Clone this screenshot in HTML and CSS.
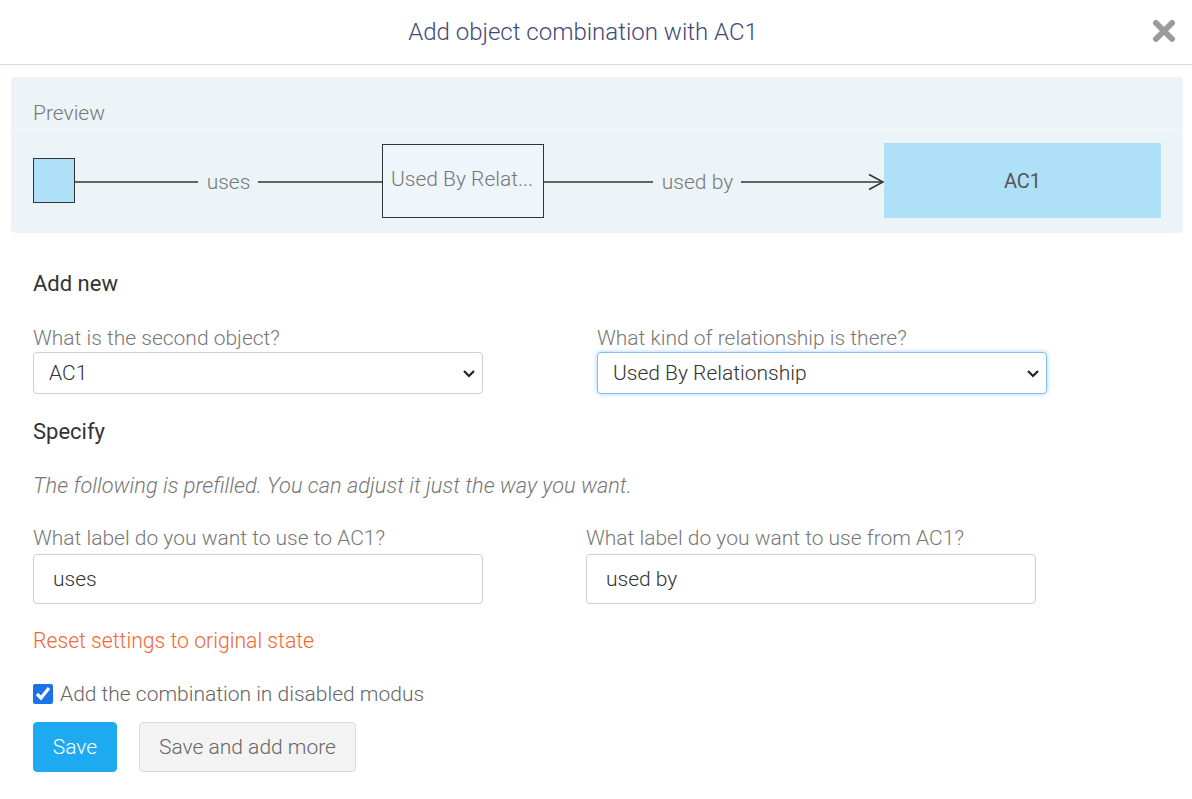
FILE: index.html
```html
<!DOCTYPE html>
<html>
<head>
<meta charset="utf-8">
<link rel="stylesheet" href="styles.css">
</head>
<body>
<header class="modal-header">
  <h1 class="modal-title">Add object combination with AC1</h1>
  <span class="close-btn">
    <svg width="24" height="24" viewBox="0 0 24 24"><path d="M4 4 L20 20 M20 4 L4 20" stroke="#9b9b9b" stroke-width="6" stroke-linecap="round"/></svg>
  </span>
</header>
<main class="modal-body">
  <section class="preview">
    <div class="preview-head">Preview</div>
    <div class="preview-diagram">
      <svg width="1172" height="104" viewBox="0 0 1172 104">
        <rect x="22.5" y="29.5" width="41" height="44" fill="#aee0f7" stroke="#333" stroke-width="1"/>
        <line x1="64" y1="53" x2="187" y2="53" stroke="#333" stroke-width="1.5"/>
        <text x="217.5" y="60" class="dg-text" text-anchor="middle">uses</text>
        <line x1="247" y1="53" x2="371" y2="53" stroke="#333" stroke-width="1.5"/>
        <rect x="371.5" y="15.5" width="161" height="73" fill="#eef5fb" stroke="#333" stroke-width="1"/>
        <text x="380" y="57" class="dg-text">Used By Relat...</text>
        <line x1="533" y1="53" x2="642" y2="53" stroke="#333" stroke-width="1.5"/>
        <text x="686.5" y="60" class="dg-text" text-anchor="middle">used by</text>
        <line x1="730" y1="53" x2="872" y2="53" stroke="#333" stroke-width="1.5"/>
        <path d="M858 45.5 L872 53 L858 60.5" fill="none" stroke="#333" stroke-width="1.5"/>
        <rect x="873" y="14" width="277" height="75" fill="#aee0f7"/>
        <text x="1011.5" y="59" class="dg-text dg-strong" text-anchor="middle">AC1</text>
      </svg>
    </div>
  </section>

  <h2 class="section-title first">Add new</h2>
  <div class="row row-select">
    <div class="field">
      <label class="field-label">What is the second object?</label>
      <div class="select-wrap">
        <select class="control"><option>AC1</option></select>
        <svg class="chev" width="14" height="9" viewBox="0 0 14 9"><path d="M2 2 L7 7 L12 2" fill="none" stroke="#222" stroke-width="2.2"/></svg>
      </div>
    </div>
    <div class="field">
      <label class="field-label">What kind of relationship is there?</label>
      <div class="select-wrap">
        <select class="control focused"><option>Used By Relationship</option></select>
        <svg class="chev" width="14" height="9" viewBox="0 0 14 9"><path d="M2 2 L7 7 L12 2" fill="none" stroke="#222" stroke-width="2.2"/></svg>
      </div>
    </div>
  </div>

  <h2 class="section-title">Specify</h2>
  <p class="hint">The following is prefilled. You can adjust it just the way you want.</p>

  <div class="row row-input">
    <div class="field">
      <label class="field-label">What label do you want to use to AC1?</label>
      <input class="control text-input" type="text" value="uses">
    </div>
    <div class="field">
      <label class="field-label">What label do you want to use from AC1?</label>
      <input class="control text-input" type="text" value="used by">
    </div>
  </div>

  <a class="reset-link">Reset settings to original state</a>

  <label class="check-row">
    <input type="checkbox" class="check" checked>
    <span>Add the combination in disabled modus</span>
  </label>

  <div class="actions">
    <button class="btn btn-primary">Save</button>
    <button class="btn btn-secondary">Save and add more</button>
  </div>
</main>
</body>
</html>
```

FILE: styles.css
```css
* { box-sizing: border-box; }
html, body { margin: 0; padding: 0; background: #fff; }
body {
  font-family: Roboto, "Liberation Sans", sans-serif;
  font-weight: 300;
  color: #777;
  width: 1192px;
  height: 799px;
  overflow: hidden;
}

.modal-header {
  position: relative;
  height: 65px;
  border-bottom: 1px solid #dcdcdc;
  box-shadow: 0 1px 2px rgba(0,0,0,0.04);
  display: flex;
  align-items: center;
  justify-content: center;
}
.modal-title {
  margin: 0;
  font-size: 24px;
  font-weight: 300;
  color: #3f4a78;
  line-height: 30px;
  padding-bottom: 1px;
  padding-right: 26px;
}
.close-btn {
  position: absolute;
  right: 16px;
  top: 19px;
  width: 24px;
  height: 24px;
}
.close-btn svg { display: block; }

.modal-body {
  padding: 12px 9px 0 11px;
}

.preview {
  background: #ecf4f8;
  border-radius: 4px;
  height: 156px;
}
.preview-head {
  height: 52px;
  padding: 25px 0 0 22px;
  font-size: 21px;
  line-height: 22px;
  color: #777;
}
.preview-diagram {
  height: 104px;
  border-top: 1px solid #f2f7fa;
  border-radius: 4px;
}
.preview-diagram svg { display: block; margin-top: -1px; }
.dg-text {
  font-family: Roboto, "Liberation Sans", sans-serif;
  font-weight: 300;
  font-size: 21px;
  fill: #777;
}
.dg-strong { fill: #555; font-weight: 400; font-size: 20px; }

.section-title {
  margin: 26px 0 0 22px;
  font-size: 22px;
  line-height: 24px;
  font-weight: 400;
  color: #333;
}
.section-title.first { margin-top: 39px; }

.row {
  display: grid;
  grid-template-columns: 450px 450px;
  margin-left: 22px;
}
.row-select { column-gap: 114px; margin-top: 30px; }
.row-input { column-gap: 103px; margin-top: 28px; }

.field { display: flex; flex-direction: column; }
.field-label {
  font-size: 21px;
  line-height: 24px;
  color: #777;
  white-space: nowrap;
}
.row-select .field-label { margin-bottom: 2px; }
.row-input .field-label { margin-bottom: 4px; }

.select-wrap { position: relative; }
.control {
  display: block;
  width: 450px;
  font-family: Roboto, "Liberation Sans", sans-serif;
  font-weight: 300;
  font-size: 21px;
  color: #333;
  background: #fff;
  border: 1px solid #cfcfcf;
  border-radius: 4px;
  outline: none;
}
select.control {
  -webkit-appearance: none;
  appearance: none;
  height: 42px;
  padding: 0 15px;
}
select.control.focused {
  border-color: #86bdf0;
  box-shadow: 0 0 5px rgba(60, 150, 240, 0.45);
}
.chev {
  position: absolute;
  right: 7px;
  top: 17px;
  pointer-events: none;
}
.text-input {
  height: 50px;
  padding: 0 19px;
}

.hint {
  margin: 30px 0 0 22px;
  font-size: 21.8px;
  line-height: 24px;
  font-style: italic;
  color: #777;
}

.reset-link {
  display: block;
  margin: 25px 0 0 22px;
  font-size: 21.2px;
  line-height: 24px;
  color: #f26634;
  font-weight: 300;
}

.check-row {
  display: flex;
  align-items: center;
  gap: 7px;
  margin: 29px 0 0 22px;
  font-size: 21px;
  line-height: 24px;
  color: #666;
}
.check {
  margin: 0;
  width: 20px;
  height: 20px;
  accent-color: #1a73e8;
}

.actions {
  display: flex;
  gap: 22px;
  margin: 16px 0 0 22px;
}
.btn {
  height: 50px;
  border-radius: 4px;
  font-family: Roboto, "Liberation Sans", sans-serif;
  font-weight: 300;
  font-size: 21px;
  cursor: pointer;
}
.btn-primary {
  width: 84px;
  background: #1eaaf1;
  border: 1px solid #1eaaf1;
  color: #fff;
}
.btn-secondary {
  width: 217px;
  background: #f3f3f3;
  border: 1px solid #dadada;
  color: #666;
}
```
